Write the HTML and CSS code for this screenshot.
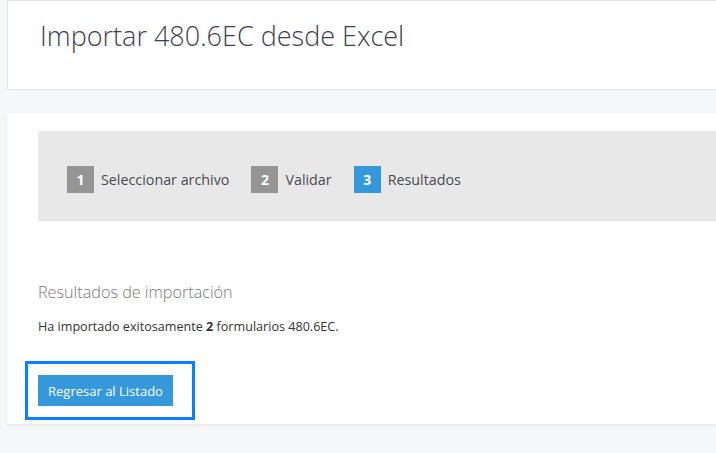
FILE: index.html
```html
<!DOCTYPE html>
<html lang="es">
<head>
<meta charset="utf-8">
<title>Importar 480.6EC desde Excel</title>
<link rel="stylesheet" href="styles.css">
</head>
<body>
<div class="page">
  <header class="header-card">
    <h1 class="title">Importar 480.6EC desde Excel</h1>
  </header>
  <section class="main-card">
    <div class="steps">
      <div class="step"><span class="badge">1</span><span class="step-label">Seleccionar archivo</span></div>
      <div class="step"><span class="badge">2</span><span class="step-label">Validar</span></div>
      <div class="step"><span class="badge badge-active">3</span><span class="step-label">Resultados</span></div>
    </div>
    <h2 class="subtitle">Resultados de importación</h2>
    <p class="message">Ha importado exitosamente <strong>2</strong> formularios 480.6EC.</p>
    <div class="actions">
      <div class="focus-ring"><button class="btn" type="button">Regresar al Listado</button></div>
    </div>
  </section>
</div>
</body>
</html>
```

FILE: styles.css
```css
* { box-sizing: border-box; }
html, body { margin: 0; padding: 0; }
body {
  background: #f6f7f9;
  font-family: "Open Sans", "Liberation Sans", sans-serif;
  width: 716px;
  height: 453px;
  overflow: hidden;
}
.page {
  padding-left: 7px;
  display: flex;
  flex-direction: column;
}
.header-card {
  background: #fff;
  border: 1px solid #e4e4e4;
  border-right: none;
  height: 90px;
  padding-left: 32px;
  display: flex;
  align-items: flex-start;
}
.title {
  margin: 15px 0 0 0;
  font-weight: 300;
  font-size: 27px;
  line-height: 40px;
  color: #3b4150;
  letter-spacing: 0;
}
.main-card {
  margin-top: 23px;
  background: #fff;
  height: 311px;
  padding: 18px 0 0 31px;
  box-shadow: 0 1px 3px rgba(0,0,0,0.08);
}
.steps {
  background: #e8e8e8;
  border-bottom: 1px solid #e0e0e0;
  height: 90px;
  padding: 35px 0 0 29px;
  display: flex;
  align-items: flex-start;
  gap: 22px;
}
.step {
  display: flex;
  align-items: center;
  gap: 7px;
}
.badge {
  width: 27px;
  height: 27px;
  background: #959595;
  color: #fff;
  font-weight: 700;
  font-size: 14px;
  display: flex;
  align-items: center;
  justify-content: center;
}
.badge-active { background: #3498db; }
.step-label {
  font-size: 14.3px;
  color: #4a4a52;
}
.subtitle {
  margin: 60px 0 0 0;
  font-size: 16.2px;
  font-weight: 300;
  line-height: 22px;
  color: #777;
}
.message {
  margin: 15px 0 0 0;
  font-size: 12.6px;
  line-height: 18px;
  color: #333;
}
.message strong { font-weight: 700; }
.actions {
  margin-top: 25px;
  margin-left: -13px;
  display: flex;
}
.focus-ring {
  border: 3px solid #0a7ffd;
  padding: 11px 19px 11px 10px;
}
.btn {
  background: #3498db;
  color: #fff;
  border: none;
  font-family: "Open Sans", "Liberation Sans", sans-serif;
  font-size: 13px;
  width: 135px;
  height: 31px;
  padding: 0;
  display: block;
}
```
